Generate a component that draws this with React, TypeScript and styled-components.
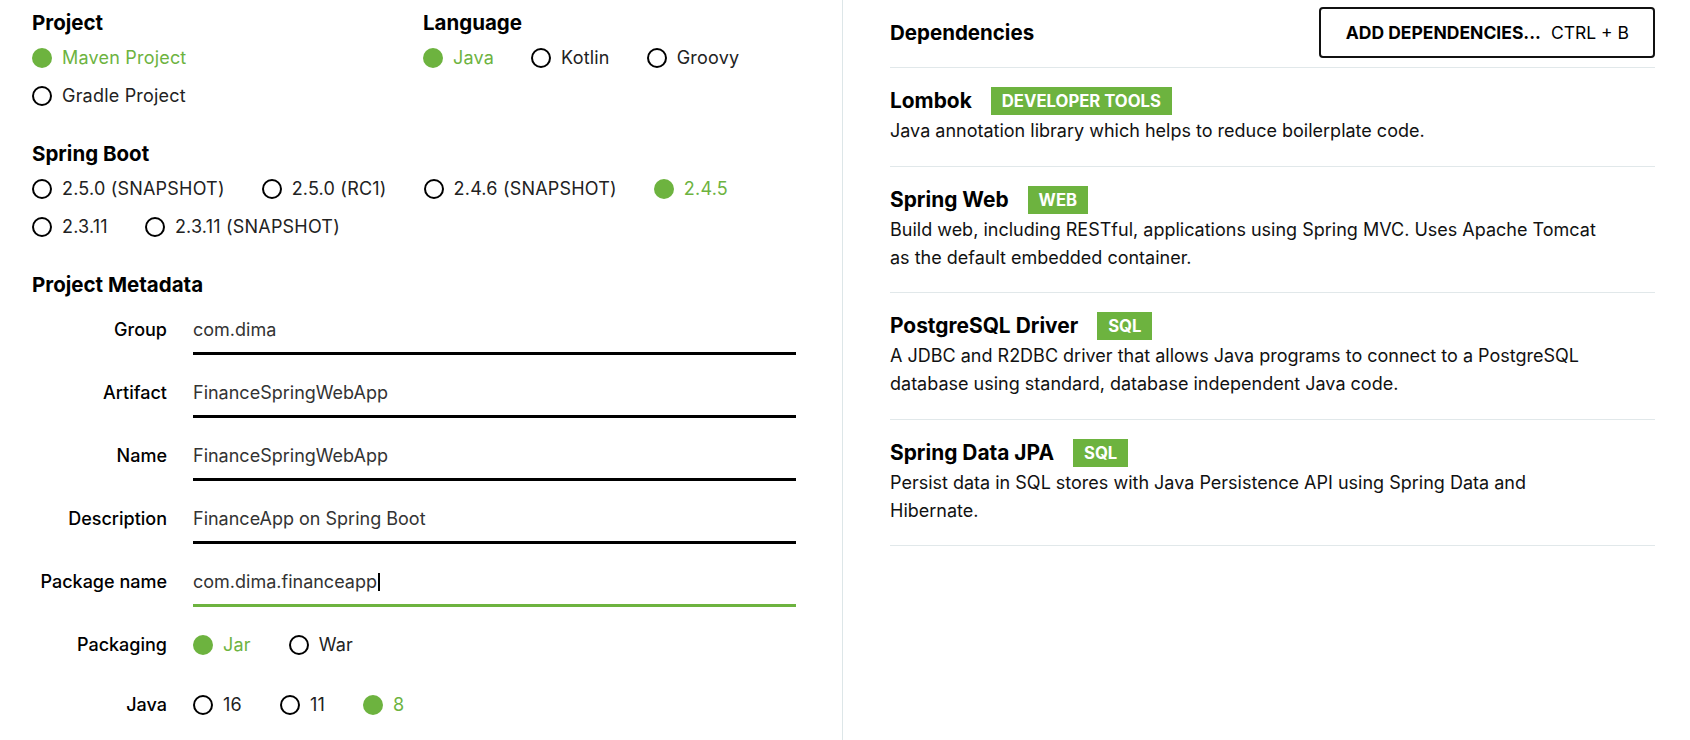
import React from "react";
import styled, { createGlobalStyle, css } from "styled-components";

const GREEN = "#6db33f";

const GlobalStyle = createGlobalStyle`
  html, body { margin: 0; padding: 0; background: #fff; }
  body {
    font-family: Inter, "Noto Sans", sans-serif;
    color: #1a1a1a;
    overflow: hidden;
    -webkit-font-smoothing: antialiased;
  }
  * { box-sizing: border-box; }
`;

const Page = styled.div`
  display: flex;
  width: 1690px;
  min-height: 100vh;
`;

const LeftPane = styled.div`
  flex: 0 0 842px;
  padding: 10px 46px 0 32px;
  display: flex;
  flex-direction: column;
  gap: 33px;
`;

const TopGrid = styled.div`
  display: grid;
  grid-template-columns: 391px 1fr;
`;

const Section = styled.section`
  display: flex;
  flex-direction: column;
  gap: 10px;
`;

const Heading = styled.h2`
  margin: 0;
  font-size: 20.5px;
  line-height: 26px;
  font-weight: 700;
  color: #000;
`;

const RadioGroup = styled.div<{ $vertical?: boolean; $gap?: number }>`
  display: flex;
  flex-wrap: wrap;
  ${(p) =>
    p.$vertical
      ? css`
          flex-direction: column;
          gap: 14px;
        `
      : css`
          column-gap: ${p.$gap ?? 37}px;
          row-gap: 14px;
        `}
`;

const RadioItem = styled.label<{ $checked?: boolean }>`
  display: flex;
  align-items: center;
  gap: 10px;
  font-size: 18px;
  line-height: 24px;
  letter-spacing: 0.2px;
  white-space: nowrap;
  cursor: pointer;
  color: ${(p) => (p.$checked ? GREEN : "#222")};
`;

const RadioDot = styled.span<{ $checked?: boolean }>`
  flex: none;
  width: 20px;
  height: 20px;
  border-radius: 50%;
  ${(p) =>
    p.$checked
      ? css`
          background: ${GREEN};
        `
      : css`
          border: 2px solid #000;
        `}
`;

const Fields = styled.div`
  display: flex;
  flex-direction: column;
  gap: 20px;
  margin-top: 4px;
`;

const FieldRow = styled.div`
  display: grid;
  grid-template-columns: 135px 1fr;
  column-gap: 26px;
`;

const FieldLabel = styled.div`
  padding-top: 6px;
  text-align: right;
  font-size: 18px;
  line-height: 24px;
  font-weight: 500;
  color: #000;
`;

const TextBox = styled.div<{ $focused?: boolean }>`
  display: flex;
  align-items: center;
  padding: 6px 0 10px;
  font-size: 18px;
  line-height: 24px;
  color: #333;
  border-bottom: 3px solid ${(p) => (p.$focused ? GREEN : "#000")};
`;

const Caret = styled.span`
  display: inline-block;
  width: 2px;
  height: 18px;
  margin-left: 1px;
  background: #000;
`;

const RadioField = styled.div`
  padding: 6px 0 10px;
`;

const RightPane = styled.div`
  flex: 1;
  border-left: 1px solid #dde6e8;
  padding: 7px 35px 0 47px;
`;

const DepHeader = styled.div`
  display: flex;
  justify-content: space-between;
  align-items: center;
  padding-bottom: 9px;
  border-bottom: 1px solid #e1e8ea;
`;

const AddButton = styled.button`
  height: 51px;
  padding: 0 24px 0 25px;
  display: flex;
  align-items: center;
  gap: 10px;
  background: #fff;
  border: 2px solid #111;
  border-radius: 4px;
  font-family: inherit;
  font-size: 17.5px;
  color: #000;
  cursor: pointer;
`;

const ButtonMain = styled.span`
  font-weight: 700;
`;

const ButtonKey = styled.span`
  font-weight: 400;
`;

const DepList = styled.div`
  display: flex;
  flex-direction: column;
`;

const DepItem = styled.div`
  padding: 19px 0 20.5px;
  border-bottom: 1px solid #e1e8ea;
`;

const DepTitle = styled.div`
  display: flex;
  align-items: center;
  gap: 19px;
  height: 28px;
`;

const DepName = styled.span`
  font-size: 20.9px;
  line-height: 28px;
  font-weight: 700;
  color: #000;
`;

const Badge = styled.span`
  background: ${GREEN};
  color: #fff;
  font-size: 16.7px;
  line-height: 28px;
  font-weight: 700;
  padding: 0 11px;
`;

const DepDesc = styled.p`
  margin: 2px 0 0;
  max-width: 715px;
  font-size: 18px;
  line-height: 28px;
  color: #111;
`;

type Opt = { label: string; checked?: boolean };

const Radios = ({ options, vertical, gap }: { options: Opt[]; vertical?: boolean; gap?: number }) => (
  <RadioGroup $vertical={vertical} $gap={gap}>
    {options.map((o) => (
      <RadioItem key={o.label} $checked={o.checked}>
        <RadioDot $checked={o.checked} />
        {o.label}
      </RadioItem>
    ))}
  </RadioGroup>
);

const fields = [
  { label: "Group", value: "com.dima" },
  { label: "Artifact", value: "FinanceSpringWebApp" },
  { label: "Name", value: "FinanceSpringWebApp" },
  { label: "Description", value: "FinanceApp on Spring Boot" },
  { label: "Package name", value: "com.dima.financeapp", focused: true },
];

const deps = [
  {
    name: "Lombok",
    tag: "DEVELOPER TOOLS",
    desc: "Java annotation library which helps to reduce boilerplate code.",
  },
  {
    name: "Spring Web",
    tag: "WEB",
    desc: "Build web, including RESTful, applications using Spring MVC. Uses Apache Tomcat as the default embedded container.",
  },
  {
    name: "PostgreSQL Driver",
    tag: "SQL",
    desc: "A JDBC and R2DBC driver that allows Java programs to connect to a PostgreSQL database using standard, database independent Java code.",
  },
  {
    name: "Spring Data JPA",
    tag: "SQL",
    desc: "Persist data in SQL stores with Java Persistence API using Spring Data and Hibernate.",
  },
];

export default function App() {
  return (
    <>
      <GlobalStyle />
      <Page>
        <LeftPane>
          <TopGrid>
            <Section>
              <Heading>Project</Heading>
              <Radios vertical options={[{ label: "Maven Project", checked: true }, { label: "Gradle Project" }]} />
            </Section>
            <Section>
              <Heading>Language</Heading>
              <Radios options={[{ label: "Java", checked: true }, { label: "Kotlin" }, { label: "Groovy" }]} />
            </Section>
          </TopGrid>

          <Section>
            <Heading>Spring Boot</Heading>
            <Radios
              options={[
                { label: "2.5.0 (SNAPSHOT)" },
                { label: "2.5.0 (RC1)" },
                { label: "2.4.6 (SNAPSHOT)" },
                { label: "2.4.5", checked: true },
                { label: "2.3.11" },
                { label: "2.3.11 (SNAPSHOT)" },
              ]}
            />
          </Section>

          <Section>
            <Heading>Project Metadata</Heading>
            <Fields>
              {fields.map((f) => (
                <FieldRow key={f.label}>
                  <FieldLabel>{f.label}</FieldLabel>
                  <TextBox $focused={f.focused}>
                    {f.value}
                    {f.focused && <Caret />}
                  </TextBox>
                </FieldRow>
              ))}
              <FieldRow>
                <FieldLabel>Packaging</FieldLabel>
                <RadioField>
                  <Radios gap={38} options={[{ label: "Jar", checked: true }, { label: "War" }]} />
                </RadioField>
              </FieldRow>
              <FieldRow>
                <FieldLabel>Java</FieldLabel>
                <RadioField>
                  <Radios gap={38} options={[{ label: "16" }, { label: "11" }, { label: "8", checked: true }]} />
                </RadioField>
              </FieldRow>
            </Fields>
          </Section>
        </LeftPane>

        <RightPane>
          <DepHeader>
            <Heading>Dependencies</Heading>
            <AddButton>
              <ButtonMain>ADD DEPENDENCIES...</ButtonMain>
              <ButtonKey>CTRL + B</ButtonKey>
            </AddButton>
          </DepHeader>
          <DepList>
            {deps.map((d) => (
              <DepItem key={d.name}>
                <DepTitle>
                  <DepName>{d.name}</DepName>
                  <Badge>{d.tag}</Badge>
                </DepTitle>
                <DepDesc>{d.desc}</DepDesc>
              </DepItem>
            ))}
          </DepList>
        </RightPane>
      </Page>
    </>
  );
}
